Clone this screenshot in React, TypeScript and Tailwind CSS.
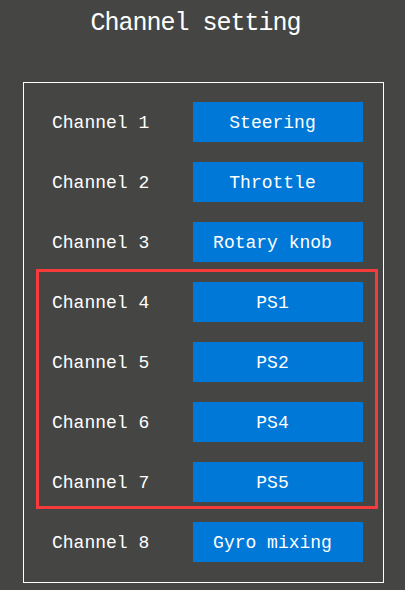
import React from "react";

const font = { fontFamily: '"Liberation Mono", "DejaVu Sans Mono", monospace' };

function Row({ label, value, labelPad }: { label: string; value: string; labelPad: string }) {
  return (
    <div className={`flex items-center h-[40px] ${labelPad}`}>
      <div className="w-[141px] text-[18px] text-white pt-[2px] whitespace-pre">{label}</div>
      <div className="w-[170px] h-[40px] bg-[#0078d7] flex items-center justify-center pr-[11px] text-[18px] text-white pt-[2px] whitespace-pre">
        {value}
      </div>
    </div>
  );
}

export default function App() {
  return (
    <div className="w-[405px] h-[590px] bg-[#454643] overflow-hidden" style={font}>
      <div className="h-[47px] leading-[47px] text-center text-white text-[25px] tracking-[-1px] pr-[14px]">
        Channel setting
      </div>
      <div className="mt-[35px] ml-[23px] w-[361px] h-[501px] border border-white pt-[19px]">
        <div className="flex flex-col gap-5">
          <Row label="Channel 1" value="Steering" labelPad="pl-[28px]" />
          <Row label="Channel 2" value="Throttle" labelPad="pl-[28px]" />
          <Row label="Channel 3" value="Rotary knob" labelPad="pl-[28px]" />
        </div>
        <div className="mt-[7px] ml-[12px] w-[342px] border-[3px] border-[#f53b3b] pt-[10px] pb-[4px] flex flex-col gap-5">
          <Row label="Channel 4" value="PS1" labelPad="pl-[13px]" />
          <Row label="Channel 5" value="PS2" labelPad="pl-[13px]" />
          <Row label="Channel 6" value="PS4" labelPad="pl-[13px]" />
          <Row label="Channel 7" value="PS5" labelPad="pl-[13px]" />
        </div>
        <div className="mt-[13px]">
          <Row label="Channel 8" value="Gyro mixing" labelPad="pl-[28px]" />
        </div>
      </div>
    </div>
  );
}
